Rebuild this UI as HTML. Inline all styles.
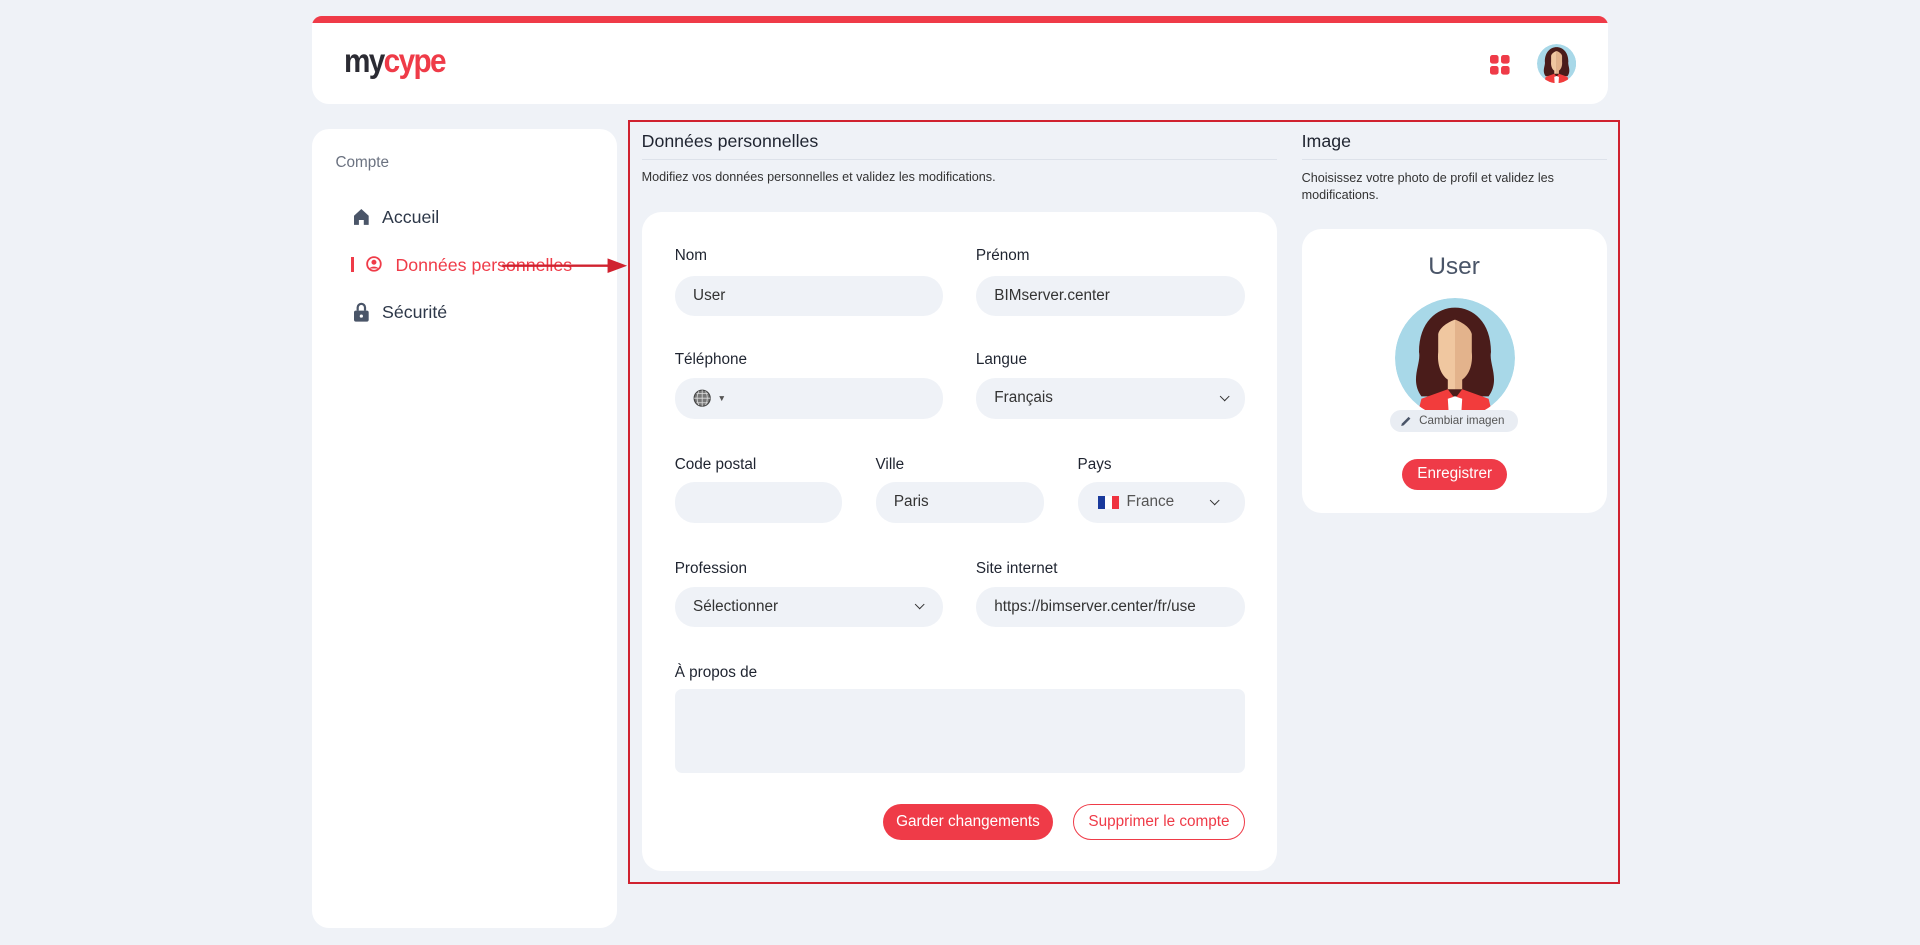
<!DOCTYPE html>
<html><head><meta charset="utf-8"><style>
html{zoom:1.22449}
*{box-sizing:border-box;margin:0;padding:0}
body{width:1568px;height:772px;background:#eff2f7;font-family:"Liberation Sans",sans-serif;color:#1f2430;position:relative;overflow:hidden}
.abs{position:absolute}
.hdr{left:255px;top:13px;width:1058px;height:72px;background:#fff;border-radius:8px 8px 14px 14px;overflow:hidden}
.hdr .bar{position:absolute;left:0;top:0;right:0;height:6px;background:#ef3b48}
.logo{left:26px;top:22px;font-size:27px;font-weight:bold;letter-spacing:-1.5px;transform:scaleX(.9);transform-origin:left}
.side{left:255px;top:105px;width:249px;height:653px;background:#fff;border-radius:14px}
.nav{font-size:14.5px;color:#2d3748}
.lbl{font-size:12.5px;color:#1f2430}
.inp{background:#eff2f7;border-radius:16px;height:33px;font-size:12.5px;color:#333;padding-left:15px;line-height:33px}
.chev{position:absolute;right:14px;top:12px;width:6px;height:6px;border-right:1.5px solid #333;border-bottom:1.5px solid #333;transform:rotate(45deg)}
.card{background:#fff;border-radius:16px}
.btn{border-radius:15px;font-size:12.5px;display:flex;align-items:center;justify-content:center;height:29px}
</style></head><body>
<div class="abs hdr"><div class="bar"></div>
<div class="abs logo"><span style="color:#2b2b33">my</span><span style="color:#ef3b48">cype</span></div>
<svg class="abs" style="left:962px;top:32px" width="16" height="16"><rect x="0" y="0" width="7" height="7" rx="2" fill="#ef3b48"/><rect x="9" y="0" width="7" height="7" rx="2" fill="#ef3b48"/><rect x="0" y="9" width="7" height="7" rx="2" fill="#ef3b48"/><rect x="9" y="9" width="7" height="7" rx="2" fill="#ef3b48"/></svg>
<svg class="abs" style="left:1000px;top:23px" width="32" height="32" viewBox="0 0 100 100"><defs><clipPath id="c1"><circle cx="50" cy="50" r="50"/></clipPath></defs><g clip-path="url(#c1)"><circle cx="50" cy="50" r="50" fill="#a8d8e8"/><path d="M22 82C12 68 22 55 20 45 20 20 35 8 50 8 65 8 80 20 80 45 78 55 88 68 78 82Z" fill="#4a1c1a"/><path d="M36 30C38 22 50 18 50 18V76H44V68C38 64 35 55 36 45Z" fill="#f0c7a0"/><path d="M64 30C62 22 50 18 50 18V76H56V68C62 64 65 55 64 45Z" fill="#e3b38c"/><path d="M18 100 22 84 44 76 50 84 56 76 78 84 82 100Z" fill="#f23c3c"/><path d="M44 84 50 82 56 84 55 100 45 100Z" fill="#fff"/></g></svg>
</div>

<div class="abs side">
<div class="abs" style="left:19px;top:21px;font-size:12.5px;color:#6b7280">Compte</div>
<svg class="abs" style="left:34px;top:66px" width="12" height="13" viewBox="0 0 12 13"><path d="M6 0 12 5.5V13H8V9H4V13H0V5.5Z" fill="#4a5568"/></svg>
<div class="abs nav" style="left:57px;top:64px">Accueil</div>
<div class="abs" style="left:32px;top:105px;width:2px;height:12px;background:#ef3b48"></div>
<svg class="abs" style="left:44px;top:104px" width="13" height="13" viewBox="0 0 14 14"><circle cx="7" cy="7" r="6" fill="none" stroke="#ef3b48" stroke-width="1.6"/><circle cx="7" cy="5.5" r="2.2" fill="#ef3b48"/><path d="M3.2 11C4 8.8 10 8.8 10.8 11" fill="#ef3b48"/></svg>
<div class="abs nav" style="left:68px;top:103px;color:#ef3b48">Données personnelles</div>
<svg class="abs" style="left:34px;top:142px" width="12" height="16" viewBox="0 0 12 16"><path d="M3 7V4.5a3 3 0 0 1 6 0V7" fill="none" stroke="#4a5568" stroke-width="1.8"/><rect x="0" y="7" width="12" height="9" rx="1.5" fill="#4a5568"/><circle cx="6" cy="11.5" r="1.3" fill="#fff"/></svg>
<div class="abs nav" style="left:57px;top:142px">Sécurité</div>
</div>

<svg class="abs" style="left:400px;top:205px" width="120" height="24"><line x1="10" y1="12" x2="100" y2="12" stroke="#d0222f" stroke-width="2"/><path d="M96 6 112 12 96 18Z" fill="#d0222f"/></svg>
<div class="abs" style="left:513px;top:98px;width:810px;height:624px;border:2px solid #d0222f"></div>

<div class="abs" style="left:524px;top:107px;font-size:14.5px">Données personnelles</div>
<div class="abs" style="left:524px;top:130px;width:519px;height:1px;background:#dde2ea"></div>
<div class="abs" style="left:524px;top:139px;font-size:10.3px;color:#333">Modifiez vos données personnelles et validez les modifications.</div>

<div class="abs card" style="left:524px;top:173px;width:519px;height:538px"></div>
<div class="abs lbl" style="left:551px;top:202px">Nom</div>
<div class="abs lbl" style="left:797px;top:202px">Prénom</div>
<div class="abs inp" style="left:551px;top:225px;width:219px">User</div>
<div class="abs inp" style="left:797px;top:225px;width:220px">BIMserver.center</div>

<div class="abs lbl" style="left:551px;top:287px">Téléphone</div>
<div class="abs lbl" style="left:797px;top:287px">Langue</div>
<div class="abs inp" style="left:551px;top:309px;width:219px"><svg style="position:absolute;left:15px;top:9px" width="15" height="15" viewBox="0 0 16 16"><circle cx="8" cy="8" r="7" fill="#777" stroke="#444" stroke-width="1"/><path d="M1 8h14M8 1v14M3 4h10M3 12h10M5 2c-2 4-2 8 0 12M11 2c2 4 2 8 0 12" stroke="#ddd" stroke-width=".7" fill="none"/></svg><span style="position:absolute;left:35px;top:0;font-size:7px;color:#555">▼</span></div>
<div class="abs inp" style="left:797px;top:309px;width:220px">Français<i class="chev"></i></div>

<div class="abs lbl" style="left:551px;top:372px">Code postal</div>
<div class="abs lbl" style="left:715px;top:372px">Ville</div>
<div class="abs lbl" style="left:880px;top:372px">Pays</div>
<div class="abs inp" style="left:551px;top:394px;width:137px"></div>
<div class="abs inp" style="left:715px;top:394px;width:138px">Paris</div>
<div class="abs inp" style="left:880px;top:394px;width:137px;padding-left:40px;color:#555"><span style="position:absolute;left:17px;top:11px;width:17px;height:11px;background:linear-gradient(90deg,#1a3a9c 33%,#fff 33% 66%,#ef3340 66%)"></span>France<i class="chev" style="right:22px"></i></div>

<div class="abs lbl" style="left:551px;top:457px">Profession</div>
<div class="abs lbl" style="left:797px;top:457px">Site internet</div>
<div class="abs inp" style="left:551px;top:479px;width:219px">Sélectionner<i class="chev" style="right:16px"></i></div>
<div class="abs inp" style="left:797px;top:479px;width:220px">https://bimserver.center/fr/use</div>

<div class="abs lbl" style="left:551px;top:542px">À propos de</div>
<div class="abs" style="left:551px;top:563px;width:466px;height:68px;background:#eff2f7;border-radius:6px"></div>

<div class="abs btn" style="left:721px;top:657px;width:139px;background:#ef3b48;color:#fff">Garder changements</div>
<div class="abs btn" style="left:876px;top:657px;width:141px;border:1px solid #ef3b48;color:#ef3b48;background:#fff">Supprimer le compte</div>

<div class="abs" style="left:1063px;top:107px;font-size:14.5px">Image</div>
<div class="abs" style="left:1063px;top:130px;width:249px;height:1px;background:#dde2ea"></div>
<div class="abs" style="left:1063px;top:139px;width:240px;font-size:10.3px;line-height:14px;color:#333">Choisissez votre photo de profil et validez les modifications.</div>

<div class="abs card" style="left:1063px;top:187px;width:249px;height:232px"></div>
<div class="abs" style="left:1063px;top:207px;width:249px;text-align:center;font-size:20px;color:#4a5568">User</div>
<svg class="abs" style="left:1139px;top:243px" width="98" height="98" viewBox="0 0 100 100"><defs><clipPath id="c2"><circle cx="50" cy="50" r="50"/></clipPath></defs><g clip-path="url(#c2)"><circle cx="50" cy="50" r="50" fill="#a8d8e8"/><path d="M22 82C12 68 22 55 20 45 20 20 35 8 50 8 65 8 80 20 80 45 78 55 88 68 78 82Z" fill="#4a1c1a"/><path d="M36 30C38 22 50 18 50 18V76H44V68C38 64 35 55 36 45Z" fill="#f0c7a0"/><path d="M64 30C62 22 50 18 50 18V76H56V68C62 64 65 55 64 45Z" fill="#e3b38c"/><path d="M18 100 22 84 44 76 50 84 56 76 78 84 82 100Z" fill="#f23c3c"/><path d="M44 84 50 82 56 84 55 100 45 100Z" fill="#fff"/></g></svg>
<div class="abs" style="left:1135px;top:335px;width:105px;height:18px;border-radius:9px;background:#e9edf3;font-size:9.5px;color:#555;line-height:18px;padding-left:24px">Cambiar imagen</div>
<svg class="abs" style="left:1143px;top:339px" width="10" height="10" viewBox="0 0 10 10"><path d="M1 9 1.5 7 7 1.5 8.5 3 3 8.5Z" fill="#4a5568"/></svg>
<div class="abs btn" style="left:1145px;top:375px;width:86px;height:25px;background:#ef3b48;color:#fff;border-radius:13px">Enregistrer</div>
</body></html>
